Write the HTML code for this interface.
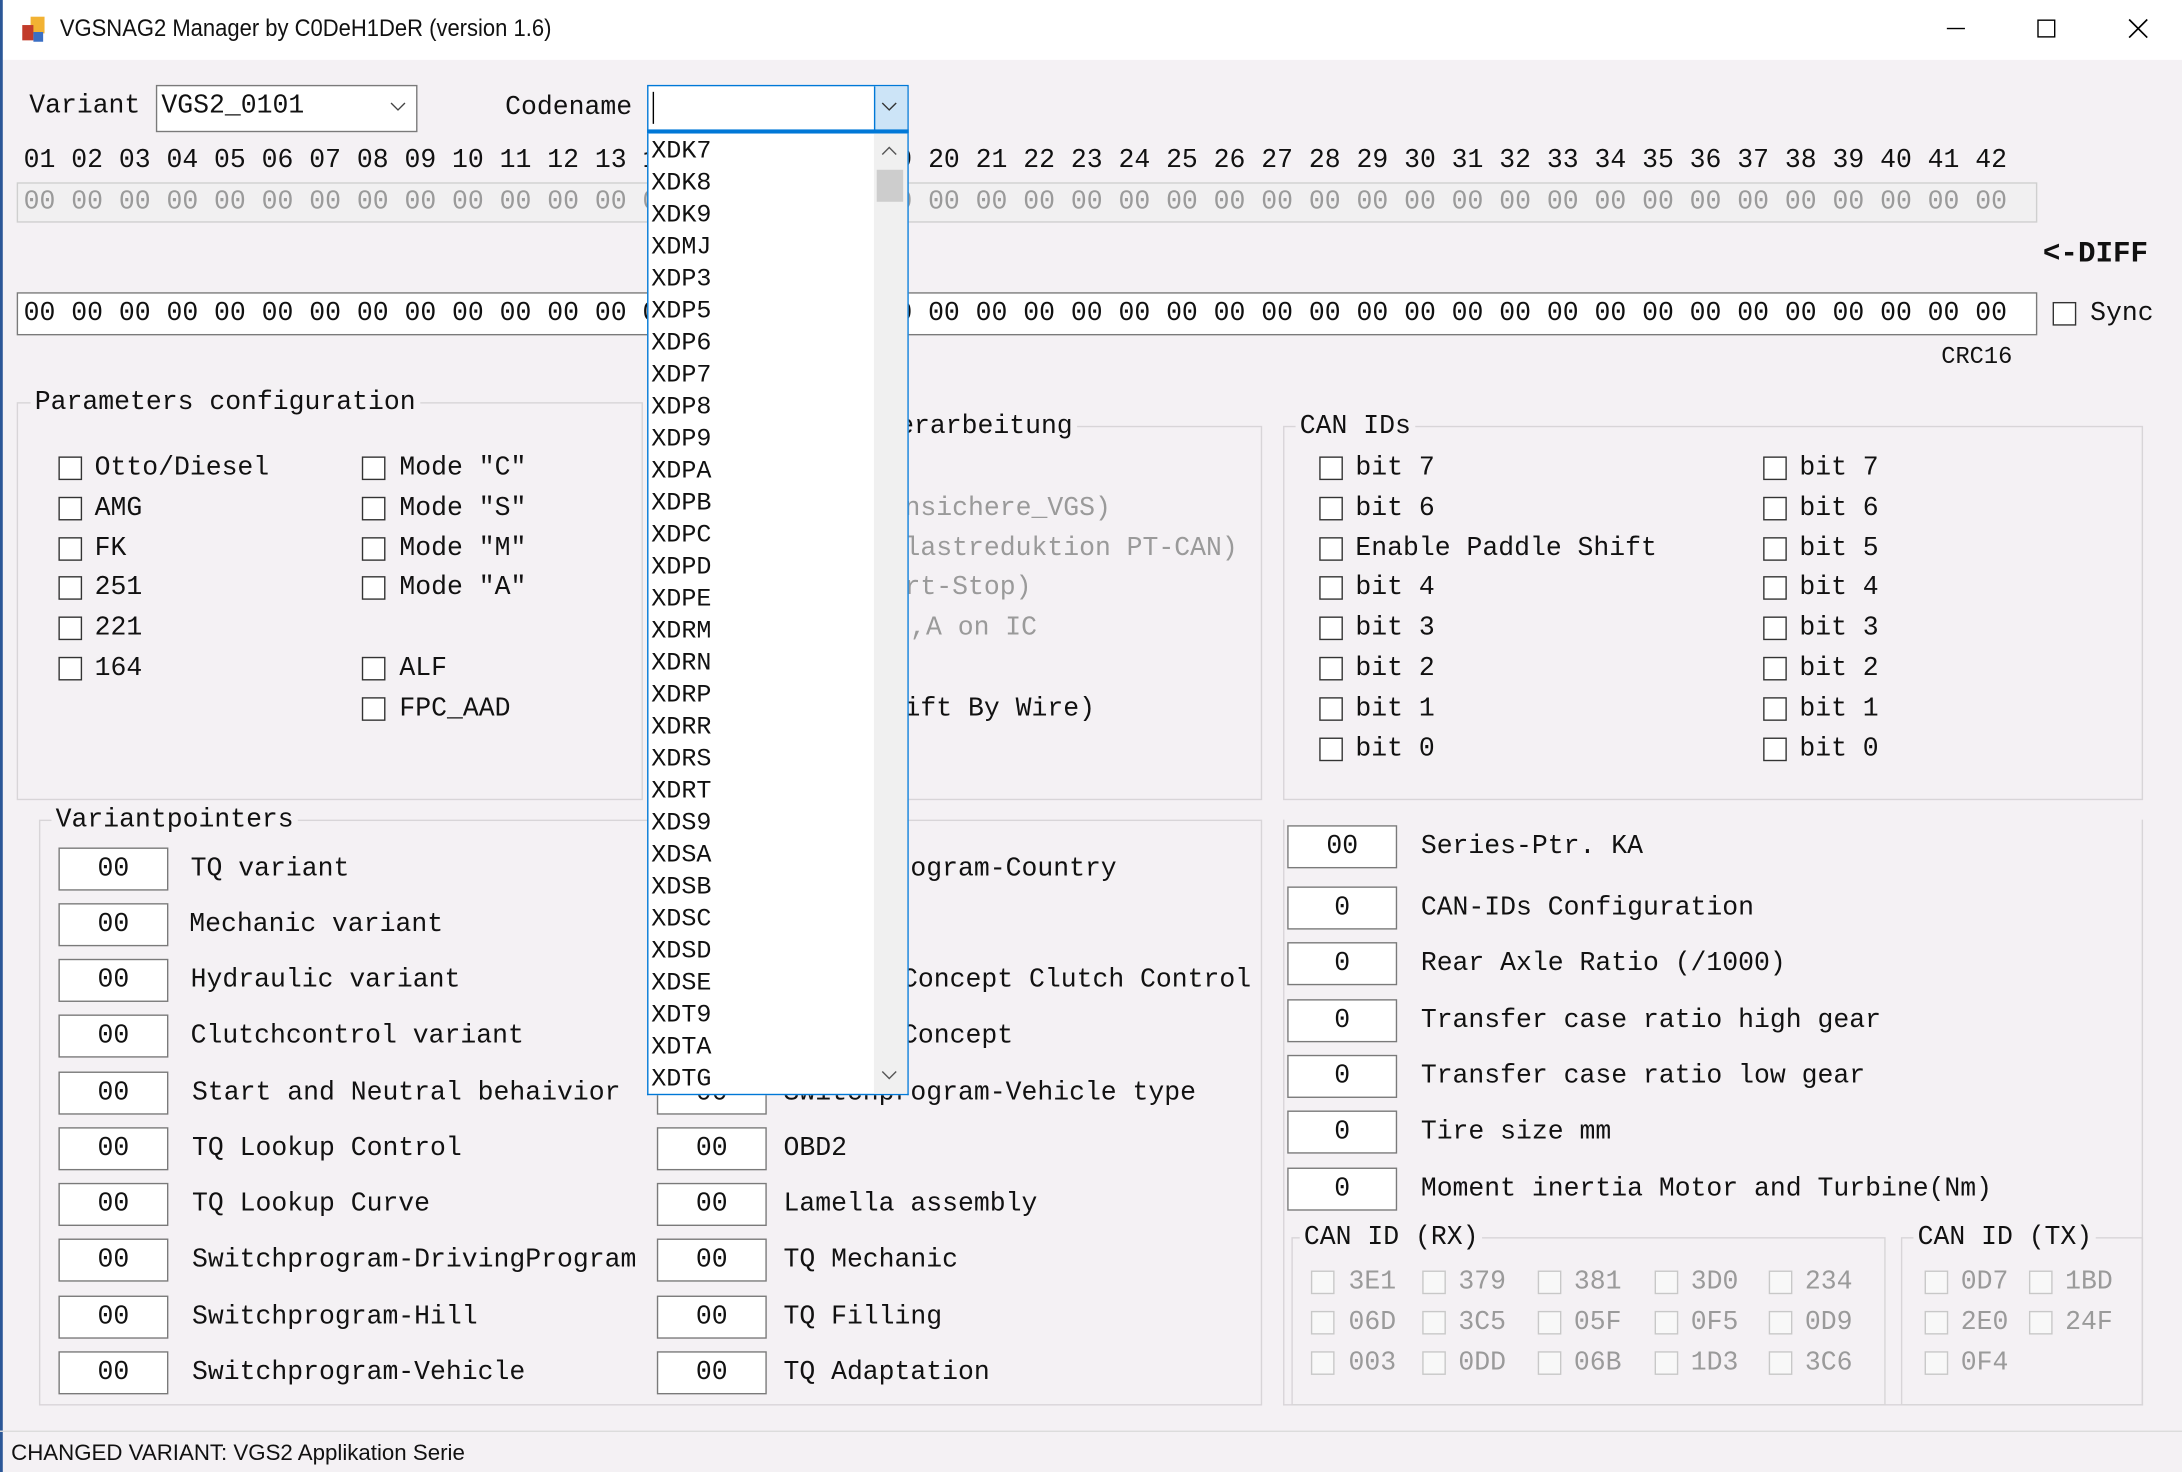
<!DOCTYPE html>
<html><head><meta charset="utf-8"><style>
*{margin:0;padding:0;box-sizing:border-box}
html,body{width:2182px;height:1472px;overflow:hidden;background:#f4f1f4}
#w{position:absolute;left:0;top:0;width:1568px;height:1058px;transform:scale(1.3916);transform-origin:0 0;background:#f4f1f4;font-family:"Liberation Mono",monospace;font-size:19px;color:#111}
.a{position:absolute;white-space:pre;line-height:20px}
.g{color:#9a9a9a}
.cb{position:absolute;width:17px;height:17px;border:1px solid #333;background:#fff}
.cbd{position:absolute;width:17px;height:17px;border:1px solid #c8c8c8;background:#f8f8f8}
.box{position:absolute;border:1px solid #d8d5d8}
.lg{position:absolute;background:#f4f1f4;padding:0 3px;white-space:pre;line-height:20px}
.in{position:absolute;width:79px;height:31px;border:1px solid #7a7a7a;background:#fff;text-align:center;line-height:29px}
</style></head><body><div id="w">
<div style="position:absolute;left:0;top:0;width:1568px;height:43px;background:#fff"></div>
<div style="position:absolute;left:0;top:0;width:2px;height:1058px;background:#2b5797"></div>
<svg style="position:absolute;left:14px;top:11px" width="20" height="20"><rect x="8" y="1" width="10" height="12" fill="#f2b233"/><rect x="2" y="7" width="8" height="11" fill="#c23b2a"/><rect x="10" y="12" width="7" height="7" fill="#3a6fc4"/></svg>
<div class="a" style="left:43px;top:11px;font-family:'Liberation Sans',sans-serif;font-size:17px;transform:scaleX(.93);transform-origin:0 0">VGSNAG2 Manager by C0DeH1DeR (version 1.6)</div>
<div style="position:absolute;left:1399px;top:20px;width:13px;height:1px;background:#000"></div>
<div style="position:absolute;left:1464px;top:14px;width:13px;height:13px;border:1px solid #000"></div>
<svg style="position:absolute;left:1529px;top:13px" width="15" height="15"><path d="M1 1L14 14M14 1L1 14" stroke="#000" stroke-width="1.2"/></svg>

<div class="a" style="left:21px;top:66px">Variant</div>
<div style="position:absolute;left:112px;top:61px;width:188px;height:34px;border:1px solid #7a7a7a;background:#fff"></div>
<div class="a" style="left:116px;top:66px">VGS2_0101</div>
<svg style="position:absolute;left:280px;top:73px" width="12" height="8"><path d="M1 1L6 6L11 1" stroke="#444" fill="none"/></svg>
<div class="a" style="left:363px;top:67px">Codename</div>

<div class="a" style="left:17px;top:105px">01 02 03 04 05 06 07 08 09 10 11 12 13 14 15 16 17 18 19 20 21 22 23 24 25 26 27 28 29 30 31 32 33 34 35 36 37 38 39 40 41 42</div>
<div style="position:absolute;left:12px;top:131px;width:1452px;height:29px;border:1px solid #cfcfcf;background:#f1f0f1"></div>
<div class="a g" style="left:17px;top:135px">00 00 00 00 00 00 00 00 00 00 00 00 00 00 00 00 00 00 00 00 00 00 00 00 00 00 00 00 00 00 00 00 00 00 00 00 00 00 00 00 00 00</div>
<div class="a" style="left:1468px;top:174px;font-weight:bold;font-size:21px">&lt;-DIFF</div>
<div style="position:absolute;left:12px;top:210px;width:1452px;height:31px;border:1px solid #7a7a7a;background:#fff"></div>
<div class="a" style="left:17px;top:215px">00 00 00 00 00 00 00 00 00 00 00 00 00 00 00 00 00 00 00 00 00 00 00 00 00 00 00 00 00 00 00 00 00 00 00 00 00 00 00 00 00 00</div>
<div class="cb" style="left:1475px;top:217px"></div>
<div class="a" style="left:1502px;top:215px">Sync</div>
<div class="a" style="left:1395px;top:248px;font-size:17px">CRC16</div>

<!-- Parameters -->
<div class="box" style="left:12px;top:289px;width:450px;height:286px"></div>
<div class="lg" style="left:22px;top:279px">Parameters configuration</div>
<div class="cb" style="left:42px;top:328px"></div><div class="a" style="left:68px;top:326px">Otto/Diesel</div>
<div class="cb" style="left:42px;top:357px"></div><div class="a" style="left:68px;top:355px">AMG</div>
<div class="cb" style="left:42px;top:386px"></div><div class="a" style="left:68px;top:384px">FK</div>
<div class="cb" style="left:42px;top:414px"></div><div class="a" style="left:68px;top:412px">251</div>
<div class="cb" style="left:42px;top:443px"></div><div class="a" style="left:68px;top:441px">221</div>
<div class="cb" style="left:42px;top:472px"></div><div class="a" style="left:68px;top:470px">164</div>
<div class="cb" style="left:260px;top:328px"></div><div class="a" style="left:287px;top:326px">Mode "C"</div>
<div class="cb" style="left:260px;top:357px"></div><div class="a" style="left:287px;top:355px">Mode "S"</div>
<div class="cb" style="left:260px;top:386px"></div><div class="a" style="left:287px;top:384px">Mode "M"</div>
<div class="cb" style="left:260px;top:414px"></div><div class="a" style="left:287px;top:412px">Mode "A"</div>
<div class="cb" style="left:260px;top:472px"></div><div class="a" style="left:287px;top:470px">ALF</div>
<div class="cb" style="left:260px;top:501px"></div><div class="a" style="left:287px;top:499px">FPC_AAD</div>

<div class="box" style="left:466px;top:306px;width:441px;height:269px"></div>
<div class="lg" style="left:631px;top:296px">Verarbeitung</div>
<div class="a g" style="left:650px;top:355px">nsichere_VGS)</div>
<div class="a g" style="left:650px;top:384px">lastreduktion PT-CAN)</div>
<div class="a g" style="left:650px;top:412px">rt-Stop)</div>
<div class="a g" style="left:654px;top:441px">,A on IC</div>
<div class="a" style="left:650px;top:499px">ift By Wire)</div>

<!-- CAN IDs -->
<div class="box" style="left:922px;top:306px;width:618px;height:269px"></div>
<div class="lg" style="left:931px;top:296px">CAN IDs</div>
<div class="cb" style="left:948px;top:328px"></div><div class="a" style="left:974px;top:326px">bit 7</div>
<div class="cb" style="left:948px;top:357px"></div><div class="a" style="left:974px;top:355px">bit 6</div>
<div class="cb" style="left:948px;top:386px"></div><div class="a" style="left:974px;top:384px">Enable Paddle Shift</div>
<div class="cb" style="left:948px;top:414px"></div><div class="a" style="left:974px;top:412px">bit 4</div>
<div class="cb" style="left:948px;top:443px"></div><div class="a" style="left:974px;top:441px">bit 3</div>
<div class="cb" style="left:948px;top:472px"></div><div class="a" style="left:974px;top:470px">bit 2</div>
<div class="cb" style="left:948px;top:501px"></div><div class="a" style="left:974px;top:499px">bit 1</div>
<div class="cb" style="left:948px;top:530px"></div><div class="a" style="left:974px;top:528px">bit 0</div>
<div class="cb" style="left:1267px;top:328px"></div><div class="a" style="left:1293px;top:326px">bit 7</div>
<div class="cb" style="left:1267px;top:357px"></div><div class="a" style="left:1293px;top:355px">bit 6</div>
<div class="cb" style="left:1267px;top:386px"></div><div class="a" style="left:1293px;top:384px">bit 5</div>
<div class="cb" style="left:1267px;top:414px"></div><div class="a" style="left:1293px;top:412px">bit 4</div>
<div class="cb" style="left:1267px;top:443px"></div><div class="a" style="left:1293px;top:441px">bit 3</div>
<div class="cb" style="left:1267px;top:472px"></div><div class="a" style="left:1293px;top:470px">bit 2</div>
<div class="cb" style="left:1267px;top:501px"></div><div class="a" style="left:1293px;top:499px">bit 1</div>
<div class="cb" style="left:1267px;top:530px"></div><div class="a" style="left:1293px;top:528px">bit 0</div>

<!-- Variantpointers -->
<div class="box" style="left:28px;top:589px;width:879px;height:421px"></div>
<div class="lg" style="left:37px;top:579px">Variantpointers</div>
<div class="in" style="left:42px;top:609px">00</div><div class="a" style="left:137px;top:614px">TQ variant</div>
<div class="in" style="left:42px;top:649px">00</div><div class="a" style="left:136px;top:654px">Mechanic variant</div>
<div class="in" style="left:42px;top:689px">00</div><div class="a" style="left:137px;top:694px">Hydraulic variant</div>
<div class="in" style="left:42px;top:729px">00</div><div class="a" style="left:137px;top:734px">Clutchcontrol variant</div>
<div class="in" style="left:42px;top:770px">00</div><div class="a" style="left:138px;top:775px">Start and Neutral behaivior</div>
<div class="in" style="left:42px;top:810px">00</div><div class="a" style="left:138px;top:815px">TQ Lookup Control</div>
<div class="in" style="left:42px;top:850px">00</div><div class="a" style="left:138px;top:855px">TQ Lookup Curve</div>
<div class="in" style="left:42px;top:890px">00</div><div class="a" style="left:138px;top:895px">Switchprogram-DrivingProgram</div>
<div class="in" style="left:42px;top:931px">00</div><div class="a" style="left:138px;top:936px">Switchprogram-Hill</div>
<div class="in" style="left:42px;top:971px">00</div><div class="a" style="left:138px;top:976px">Switchprogram-Vehicle</div>
<div class="in" style="left:472px;top:609px">00</div><div class="a" style="left:563px;top:614px">Switchprogram-Country</div>
<div class="in" style="left:472px;top:689px">00</div><div class="a" style="left:557px;top:694px">Gearbox Concept Clutch Control</div>
<div class="in" style="left:472px;top:729px">00</div><div class="a" style="left:557px;top:734px">Gearbox Concept</div>
<div class="in" style="left:472px;top:770px">00</div><div class="a" style="left:563px;top:775px">Switchprogram-Vehicle type</div>
<div class="in" style="left:472px;top:810px">00</div><div class="a" style="left:563px;top:815px">OBD2</div>
<div class="in" style="left:472px;top:850px">00</div><div class="a" style="left:563px;top:855px">Lamella assembly</div>
<div class="in" style="left:472px;top:890px">00</div><div class="a" style="left:563px;top:895px">TQ Mechanic</div>
<div class="in" style="left:472px;top:931px">00</div><div class="a" style="left:563px;top:936px">TQ Filling</div>
<div class="in" style="left:472px;top:971px">00</div><div class="a" style="left:563px;top:976px">TQ Adaptation</div>

<!-- right -->
<div class="box" style="left:922px;top:589px;width:618px;height:421px;border-top:none"></div>
<div class="in" style="left:925px;top:593px">00</div><div class="a" style="left:1021px;top:598px">Series-Ptr. KA</div>
<div class="in" style="left:925px;top:637px">0</div><div class="a" style="left:1021px;top:642px">CAN-IDs Configuration</div>
<div class="in" style="left:925px;top:677px">0</div><div class="a" style="left:1021px;top:682px">Rear Axle Ratio (/1000)</div>
<div class="in" style="left:925px;top:718px">0</div><div class="a" style="left:1021px;top:723px">Transfer case ratio high gear</div>
<div class="in" style="left:925px;top:758px">0</div><div class="a" style="left:1021px;top:763px">Transfer case ratio low gear</div>
<div class="in" style="left:925px;top:798px">0</div><div class="a" style="left:1021px;top:803px">Tire size mm</div>
<div class="in" style="left:925px;top:839px">0</div><div class="a" style="left:1021px;top:844px">Moment inertia Motor and Turbine(Nm)</div>

<div class="box" style="left:928px;top:889px;width:427px;height:121px"></div>
<div class="lg" style="left:934px;top:879px">CAN ID (RX)</div>
<div class="box" style="left:1366px;top:889px;width:174px;height:121px"></div>
<div class="lg" style="left:1375px;top:879px">CAN ID (TX)</div>
<div class="cbd" style="left:942px;top:913px"></div><div class="a g" style="left:969px;top:911px">3E1</div>
<div class="cbd" style="left:1022px;top:913px"></div><div class="a g" style="left:1048px;top:911px">379</div>
<div class="cbd" style="left:1105px;top:913px"></div><div class="a g" style="left:1131px;top:911px">381</div>
<div class="cbd" style="left:1189px;top:913px"></div><div class="a g" style="left:1215px;top:911px">3D0</div>
<div class="cbd" style="left:1271px;top:913px"></div><div class="a g" style="left:1297px;top:911px">234</div>
<div class="cbd" style="left:942px;top:942px"></div><div class="a g" style="left:969px;top:940px">06D</div>
<div class="cbd" style="left:1022px;top:942px"></div><div class="a g" style="left:1048px;top:940px">3C5</div>
<div class="cbd" style="left:1105px;top:942px"></div><div class="a g" style="left:1131px;top:940px">05F</div>
<div class="cbd" style="left:1189px;top:942px"></div><div class="a g" style="left:1215px;top:940px">0F5</div>
<div class="cbd" style="left:1271px;top:942px"></div><div class="a g" style="left:1297px;top:940px">0D9</div>
<div class="cbd" style="left:942px;top:971px"></div><div class="a g" style="left:969px;top:969px">003</div>
<div class="cbd" style="left:1022px;top:971px"></div><div class="a g" style="left:1048px;top:969px">0DD</div>
<div class="cbd" style="left:1105px;top:971px"></div><div class="a g" style="left:1131px;top:969px">06B</div>
<div class="cbd" style="left:1189px;top:971px"></div><div class="a g" style="left:1215px;top:969px">1D3</div>
<div class="cbd" style="left:1271px;top:971px"></div><div class="a g" style="left:1297px;top:969px">3C6</div>
<div class="cbd" style="left:1383px;top:913px"></div><div class="a g" style="left:1409px;top:911px">0D7</div>
<div class="cbd" style="left:1458px;top:913px"></div><div class="a g" style="left:1484px;top:911px">1BD</div>
<div class="cbd" style="left:1383px;top:942px"></div><div class="a g" style="left:1409px;top:940px">2E0</div>
<div class="cbd" style="left:1458px;top:942px"></div><div class="a g" style="left:1484px;top:940px">24F</div>
<div class="cbd" style="left:1383px;top:971px"></div><div class="a g" style="left:1409px;top:969px">0F4</div>

<!-- status -->
<div style="position:absolute;left:0;top:1028px;width:1568px;height:1px;background:#dcdcdc"></div>
<div class="a" style="left:8px;top:1035px;font-family:'Liberation Sans',sans-serif;font-size:16px">CHANGED VARIANT: VGS2 Applikation Serie</div>

<!-- codename combo + dropdown -->
<div style="position:absolute;left:465px;top:61px;width:188px;height:35px;border:1px solid #0078d7;background:#fff"></div>
<div style="position:absolute;left:469px;top:66px;width:1px;height:23px;background:#000"></div>
<div style="position:absolute;left:628px;top:62px;width:24px;height:33px;background:#cce4f7;border-left:1px solid #0078d7"></div>
<svg style="position:absolute;left:633px;top:73px" width="12" height="8"><path d="M1 1L6 6L11 1" stroke="#333" fill="none"/></svg>
<div style="position:absolute;left:465px;top:93px;width:188px;height:3px;background:#0078d7"></div>
<div style="position:absolute;left:465px;top:96px;width:188px;height:691px;border:1px solid #0078d7;border-top:none;background:#fff;overflow:hidden">
<div class="a" style="left:2px;top:2px;line-height:23px;font-size:18px">XDK7
XDK8
XDK9
XDMJ
XDP3
XDP5
XDP6
XDP7
XDP8
XDP9
XDPA
XDPB
XDPC
XDPD
XDPE
XDRM
XDRN
XDRP
XDRR
XDRS
XDRT
XDS9
XDSA
XDSB
XDSC
XDSD
XDSE
XDT9
XDTA
XDTG</div>
<div style="position:absolute;left:162px;top:0;width:24px;height:691px;background:#f0f0f0"></div>
<div style="position:absolute;left:164px;top:26px;width:19px;height:23px;background:#cdcdcd"></div>
<svg style="position:absolute;left:167px;top:8px" width="12" height="8"><path d="M1 7L6 2L11 7" stroke="#555" fill="none"/></svg>
<svg style="position:absolute;left:167px;top:673px" width="12" height="8"><path d="M1 1L6 6L11 1" stroke="#555" fill="none"/></svg>
</div>
</div></body></html>
